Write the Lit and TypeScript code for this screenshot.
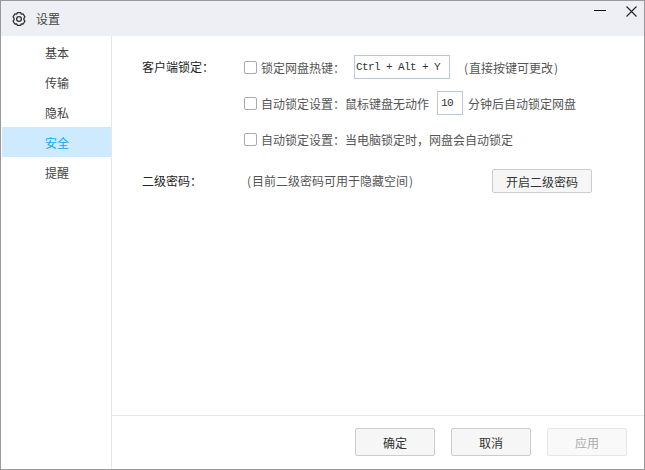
import { LitElement, html, css } from "lit";
import { customElement } from "lit/decorators.js";

const NAV = ["基本", "传输", "隐私", "安全", "提醒"];

@customElement("app-root")
export class AppRoot extends LitElement {
  static styles = css`
    :host {
      display: block;
      width: 645px;
      height: 470px;
      font-family: "Noto Sans CJK SC", "Liberation Sans", sans-serif;
      font-size: 12px;
      color: #555;
    }
    * { box-sizing: border-box; }
    .win {
      width: 645px;
      height: 470px;
      border: 1px solid #999;
      display: flex;
      flex-direction: column;
      background: #fff;
    }
    .title {
      height: 35px;
      background: #eeeff4;
      display: flex;
      align-items: center;
      padding-left: 10px;
      color: #444;
      flex: none;
    }
    .title .gear { width: 16px; height: 16px; margin-right: 9px; }
    .title .spacer { flex: 1; }
    .ctl { align-self: flex-start; display: block; }
    .min { width: 12px; height: 11px; margin-top: 5px; margin-right: 20px; }
    .close { width: 11px; height: 11px; margin-top: 5px; margin-right: 7px; }
    .body { flex: 1; display: flex; min-height: 0; }
    .side {
      width: 111px;
      flex: none;
      border-right: 1px solid #e6e6e6;
      padding-left: 1px;
      padding-top: 1px;
    }
    .nav {
      height: 30px;
      display: flex;
      align-items: center;
      padding-left: 43px;
      color: #444;
    }
    .nav.on { background: #cdeaff; color: #09aaff; }
    .main { flex: 1; display: flex; flex-direction: column; min-width: 0; }
    .content { flex: 1; padding: 19px 0 0 30px; }
    .group { display: flex; }
    .label { width: 102px; flex: none; color: #222; height: 24px; line-height: 23px; }
    .rows { display: flex; flex-direction: column; gap: 12px; }
    .row { display: flex; align-items: center; height: 24px; white-space: nowrap; }
    .cb {
      width: 13px; height: 13px; border: 1px solid #aaa; border-radius: 2px;
      margin-right: 4px; background: #fff; flex: none;
    }
    .input {
      height: 24px;
      border: 1px solid #b8c8dc;
      font-family: "Liberation Mono", monospace;
      font-size: 11px;
      letter-spacing: -0.6px;
      color: #333;
      display: flex;
      align-items: center;
      flex: none;
      white-space: pre;
    }
    .hot { width: 96px; padding-left: 1px; margin-left: 9px; margin-right: 13px; }
    .num { width: 26px; padding-left: 3px; margin-left: 8px; margin-right: 5px; }
    .par { margin: 0 1px; }
    .sec { margin-top: 18px; align-items: center; }
    .sec .label { height: 24px; line-height: 24px; }
    .hint { flex: 1; padding-left: 2px; padding-bottom: 2px; }
    .btn {
      border: 1px solid #ccc;
      border-radius: 2px;
      background: #f6f6f6;
      color: #333;
      display: flex;
      align-items: center;
      justify-content: center;
    }
    .open { width: 100px; height: 24px; margin-right: 52px; }
    .foot {
      height: 54px;
      flex: none;
      border-top: 1px solid #e6e6e6;
      display: flex;
      justify-content: flex-end;
      gap: 16px;
      padding: 12px 17px 0 0;
    }
    .foot .btn { width: 80px; height: 28px; }
    .btn.dis { background: #f9f9f9; border-color: #e6e6e6; color: #aaa; }
  `;

  render() {
    return html`
      <div class="win">
        <div class="title">
          <svg class="gear" viewBox="0 0 16 16" fill="none" stroke="#333" stroke-width="1.3" stroke-linejoin="round">
            <path d="M6.4 1.6 H9.6 L10.4 3.2 L12.2 3 L13.9 5.8 L12.9 7.3 V8.7 L13.9 10.2 L12.2 13 L10.4 12.8 L9.6 14.4 H6.4 L5.6 12.8 L3.8 13 L2.1 10.2 L3.1 8.7 V7.3 L2.1 5.8 L3.8 3 L5.6 3.2 Z" />
            <circle cx="8" cy="8" r="2.4" />
          </svg>
          <span>设置</span>
          <span class="spacer"></span>
          <svg class="ctl min" viewBox="0 0 12 11"><path d="M0 4.5 H12" stroke="#111" stroke-width="1" /></svg>
          <svg class="ctl close" viewBox="0 0 11 11"><path d="M0.5 0.5 L10.5 10.5 M10.5 0.5 L0.5 10.5" stroke="#222" stroke-width="1.1" /></svg>
        </div>
        <div class="body">
          <div class="side">
            ${NAV.map((n, i) => html`<div class="nav ${i === 3 ? "on" : ""}">${n}</div>`)}
          </div>
          <div class="main">
            <div class="content">
              <div class="group">
                <div class="label">客户端锁定：</div>
                <div class="rows">
                  <div class="row">
                    <span class="cb"></span>锁定网盘热键：
                    <span class="input hot">Ctrl + Alt + Y</span>
                    <span class="par">(</span>直接按键可更改<span class="par">)</span>
                  </div>
                  <div class="row">
                    <span class="cb"></span>自动锁定设置：鼠标键盘无动作
                    <span class="input num">10</span>
                    分钟后自动锁定网盘
                  </div>
                  <div class="row">
                    <span class="cb"></span>自动锁定设置：当电脑锁定时，网盘会自动锁定
                  </div>
                </div>
              </div>
              <div class="group sec">
                <div class="label">二级密码：</div>
                <div class="hint"><span class="par">(</span>目前二级密码可用于隐藏空间<span class="par">)</span></div>
                <div class="btn open">开启二级密码</div>
              </div>
            </div>
            <div class="foot">
              <div class="btn">确定</div>
              <div class="btn">取消</div>
              <div class="btn dis">应用</div>
            </div>
          </div>
        </div>
      </div>
    `;
  }
}
